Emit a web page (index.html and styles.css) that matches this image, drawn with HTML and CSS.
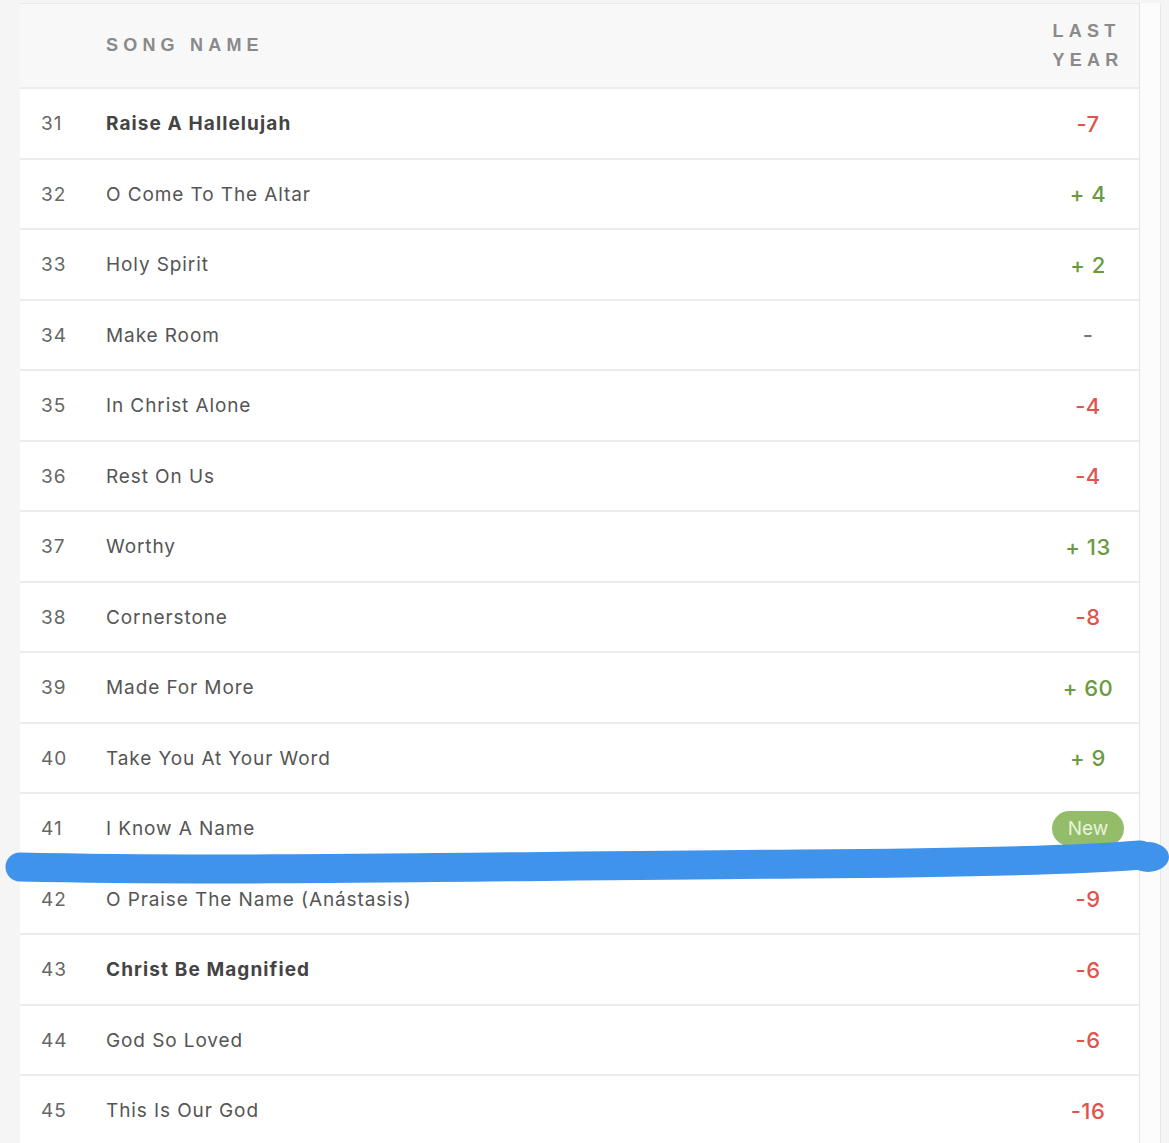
FILE: index.html
```html
<!DOCTYPE html>
<html>
<head>
<meta charset="utf-8">
<link rel="stylesheet" href="styles.css">
</head>
<body>
<div class="page">
  <div class="table">
    <div class="row head">
      <div class="num"></div>
      <div class="name"><span class="htext">SONG NAME</span></div>
      <div class="last"><span class="htext">LAST<br>YEAR</span></div>
    </div>
    <div class="row"><div class="num">31</div><div class="name bold">Raise A Hallelujah</div><div class="last down">-7</div></div>
    <div class="row"><div class="num">32</div><div class="name">O Come To The Altar</div><div class="last up">+ 4</div></div>
    <div class="row"><div class="num">33</div><div class="name">Holy Spirit</div><div class="last up">+ 2</div></div>
    <div class="row"><div class="num">34</div><div class="name">Make Room</div><div class="last same">-</div></div>
    <div class="row"><div class="num">35</div><div class="name">In Christ Alone</div><div class="last down">-4</div></div>
    <div class="row"><div class="num">36</div><div class="name">Rest On Us</div><div class="last down">-4</div></div>
    <div class="row"><div class="num">37</div><div class="name">Worthy</div><div class="last up">+ 13</div></div>
    <div class="row"><div class="num">38</div><div class="name">Cornerstone</div><div class="last down">-8</div></div>
    <div class="row"><div class="num">39</div><div class="name">Made For More</div><div class="last up">+ 60</div></div>
    <div class="row"><div class="num">40</div><div class="name">Take You At Your Word</div><div class="last up">+ 9</div></div>
    <div class="row"><div class="num">41</div><div class="name">I Know A Name</div><div class="last"><span class="badge">New</span></div></div>
    <div class="row"><div class="num">42</div><div class="name">O Praise The Name (Anástasis)</div><div class="last down">-9</div></div>
    <div class="row"><div class="num">43</div><div class="name bold">Christ Be Magnified</div><div class="last down">-6</div></div>
    <div class="row"><div class="num">44</div><div class="name">God So Loved</div><div class="last down">-6</div></div>
    <div class="row"><div class="num">45</div><div class="name">This Is Our God</div><div class="last down">-16</div></div>
  </div>
  <div class="side"></div>
</div>
<svg class="marker" width="1169" height="1143" viewBox="0 0 1169 1143">
  <path d="M 20 867 C 250 872, 500 866, 800 864 C 950 863, 1080 860, 1140 855" fill="none" stroke="#3f93ea" stroke-width="29" stroke-linecap="round"/>
  <ellipse cx="1148" cy="857" rx="21" ry="15" fill="#3f93ea"/>
</svg>
</body>
</html>
```

FILE: styles.css
```css
html, body {
  margin: 0;
  padding: 0;
  background: #f5f5f5;
  width: 1169px;
  height: 1143px;
  overflow: hidden;
  font-family: Inter, "Liberation Sans", sans-serif;
}
.page {
  display: flex;
  padding-left: 20px;
  padding-top: 3px;
  position: relative;
}
.table {
  width: 1119px;
  background: #fff;
  border-top: 1px solid #e8e8e8;
  border-right: 1px solid #e4e4e4;
}
.side {
  width: 20px;
  background: #fcfcfc;
  border-right: 1px solid #e6e6e6;
  height: 1143px;
}
.row {
  display: flex;
  align-items: center;
  height: 70.5px;
  box-sizing: border-box;
  border-bottom: 2px solid #ececec;
  padding-top: 1px;
}
.row.head {
  height: 85px;
  background: #f8f8f8;
  padding-top: 0;
}
.num {
  width: 86px;
  padding-left: 21px;
  box-sizing: border-box;
  font-size: 19px;
  letter-spacing: 1px;
  color: #666;
}
.name {
  flex: 1;
  font-size: 19px;
  color: #555;
  letter-spacing: 0.9px;
}
.name.bold {
  font-weight: 700;
  color: #444;
  letter-spacing: 1.1px;
}
.last {
  width: 96px;
  margin-right: 3px;
  text-align: center;
  font-size: 22px;
  font-weight: 500;
  letter-spacing: 0.5px;
}
.htext {
  font-family: "Liberation Sans", sans-serif;
  font-weight: 700;
  font-size: 18px;
  letter-spacing: 5.2px;
  color: #8a8a8a;
  line-height: 29px;
}
.last .htext {
  display: inline-block;
  text-align: left;
  margin-left: 0;
}
.down { color: #e0544d; }
.up { color: #6a9a3f; }
.same { color: #777; }
.badge {
  display: inline-block;
  background: #93bd68;
  color: #e8f3dd;
  font-size: 19px;
  font-weight: 400;
  letter-spacing: 0;
  padding: 6px 16px;
  border-radius: 18px;
  margin-left: 0;
}
.marker {
  position: absolute;
  left: 0;
  top: 0;
  pointer-events: none;
}
```
